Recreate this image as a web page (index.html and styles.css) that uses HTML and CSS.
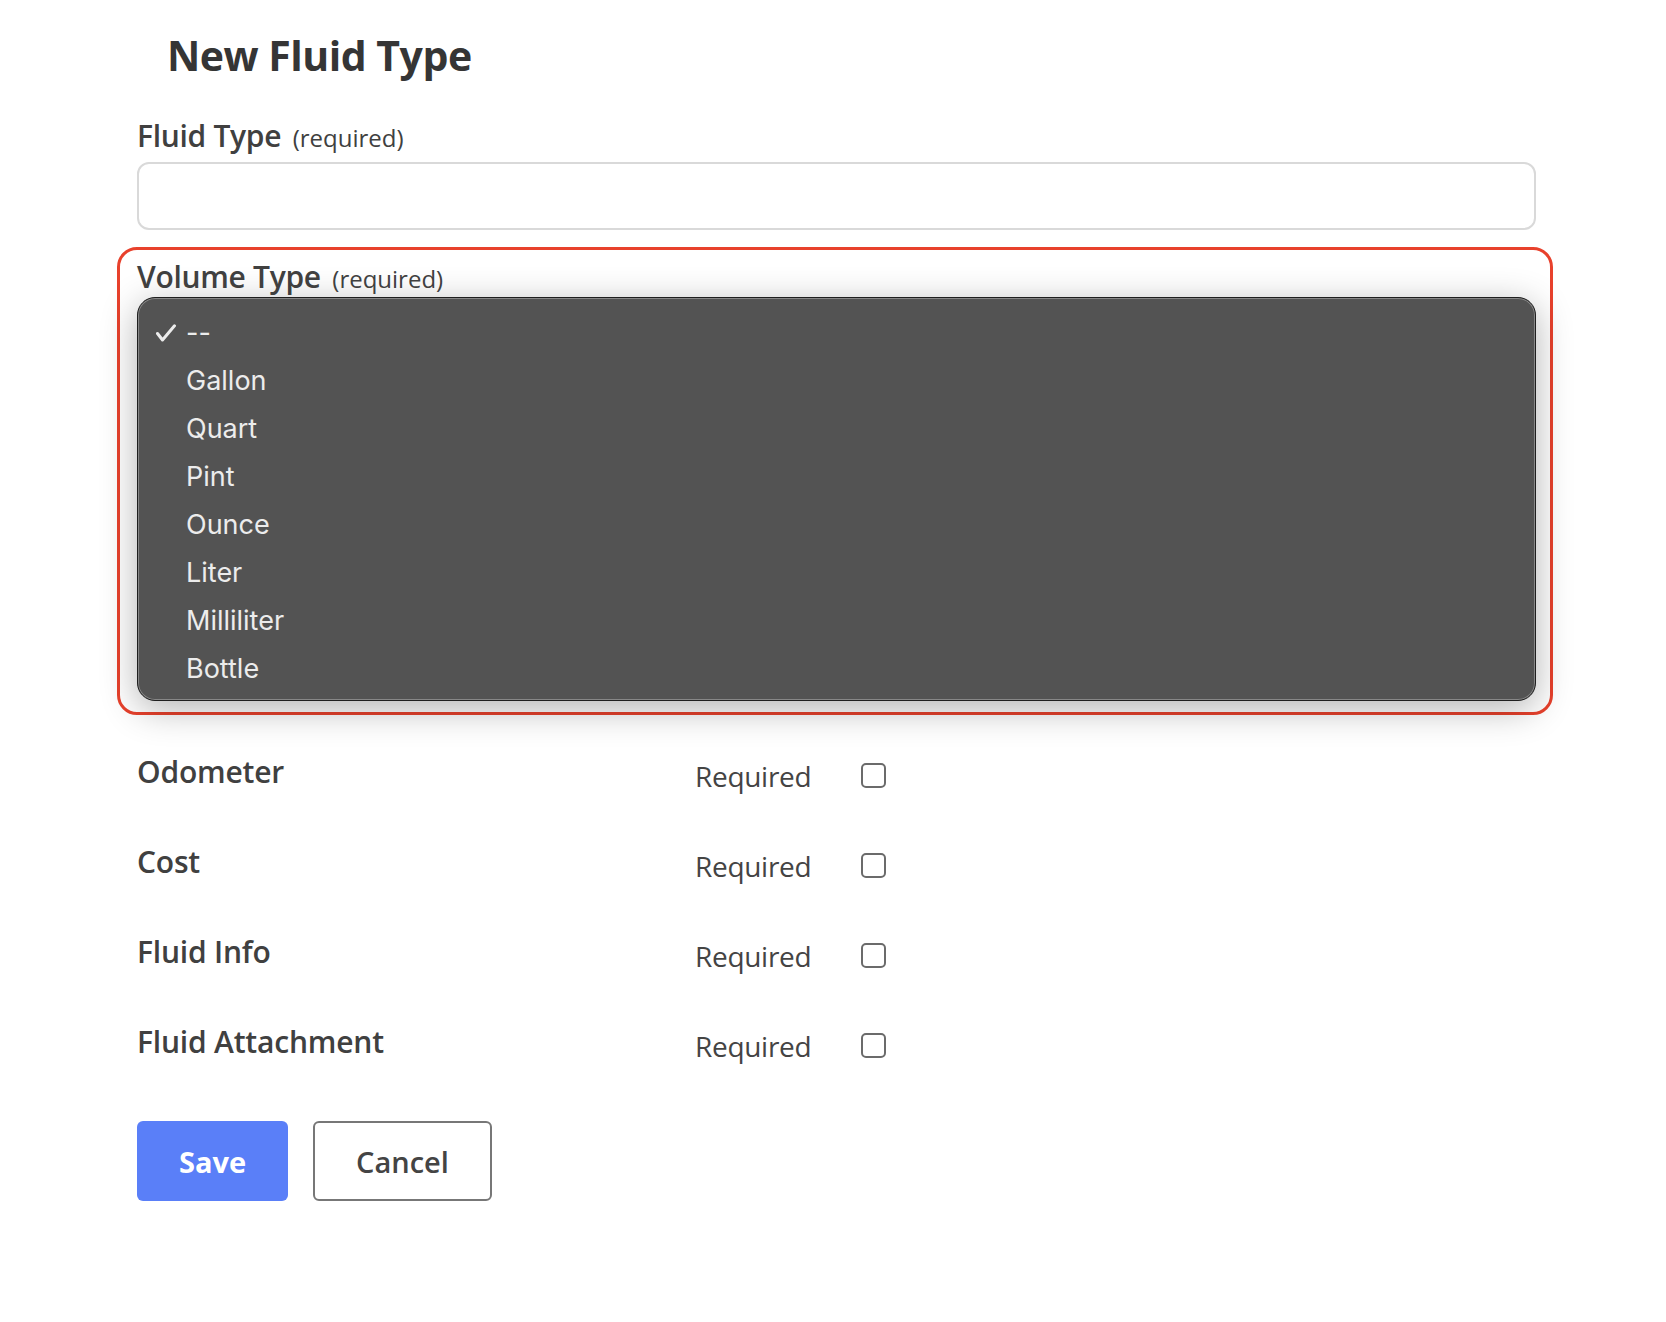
FILE: index.html
```html
<!DOCTYPE html>
<html lang="en">
<head>
    <meta charset="UTF-8">
    <meta name="viewport" content="width=device-width, initial-scale=1.0">
    <title>New Fluid Type</title>
    <link rel="stylesheet" href="styles.css">
</head>
<body>
    <div class="page">
        <h1 class="title">New Fluid Type</h1>

        <div class="field">
            <label class="field-label" for="fluidType">Fluid Type <span class="hint">(required)</span></label>
            <input type="text" id="fluidType" class="text-input">
        </div>

        <div class="field field-focus">
            <div class="field-label">Volume Type <span class="hint">(required)</span></div>
            <ul class="menu">
                <li class="menu-item selected">
                    <svg class="check" width="22" height="18" viewBox="0 0 22 18">
                        <polyline points="2.5,9.5 7.5,16 19.5,1.8" fill="none" stroke="#ececec" stroke-width="3" stroke-linecap="round" stroke-linejoin="round"/>
                    </svg>
                    --
                </li>
                <li class="menu-item">Gallon</li>
                <li class="menu-item">Quart</li>
                <li class="menu-item">Pint</li>
                <li class="menu-item">Ounce</li>
                <li class="menu-item">Liter</li>
                <li class="menu-item">Milliliter</li>
                <li class="menu-item">Bottle</li>
            </ul>
        </div>

        <div class="options">
            <div class="option-row">
                <span class="option-name">Odometer</span>
                <span class="option-req">Required</span>
                <span class="checkbox"></span>
            </div>
            <div class="option-row">
                <span class="option-name">Cost</span>
                <span class="option-req">Required</span>
                <span class="checkbox"></span>
            </div>
            <div class="option-row">
                <span class="option-name">Fluid Info</span>
                <span class="option-req">Required</span>
                <span class="checkbox"></span>
            </div>
            <div class="option-row">
                <span class="option-name">Fluid Attachment</span>
                <span class="option-req">Required</span>
                <span class="checkbox"></span>
            </div>
        </div>

        <div class="actions">
            <button class="btn btn-save">Save</button>
            <button class="btn btn-cancel">Cancel</button>
        </div>
    </div>
</body>
</html>
```

FILE: styles.css
```css
body {
    margin: 0;
    padding: 0;
    background: #fff;
    font-family: "Open Sans", Arial, sans-serif;
    color: #404040;
}

.page {
    width: 1399px;
    padding: 30px 0 0 137px;
}

.title {
    margin: 0 0 38px 30px;
    font-size: 41px;
    line-height: 50px;
    font-weight: 700;
    color: #353535;
    letter-spacing: -0.5px;
}

.field-label {
    display: block;
    font-size: 30px;
    line-height: 36px;
    font-weight: 600;
    color: #404040;
    letter-spacing: -0.3px;
}

.hint {
    font-size: 24px;
    font-weight: 400;
    margin-left: 4px;
    letter-spacing: 0;
}

.field {
    margin-bottom: 17px;
}

.field-label + .text-input {
    margin-top: 6px;
}

.text-input {
    display: block;
    width: 100%;
    height: 68px;
    box-sizing: border-box;
    border: 2px solid #d9d9d9;
    border-radius: 12px;
    background: #fff;
}

.field-focus {
    margin: 0 -17px 0 -20px;
    padding: 9px 14px 11px 17px;
    border: 3px solid #e8412c;
    border-radius: 20px;
}

.menu {
    list-style: none;
    margin: 0;
    padding: 11px 0 7px 0;
    height: 404px;
    box-sizing: border-box;
    background: #535353;
    border: 1px solid #1f1f1f;
    border-radius: 18px;
    box-shadow: inset 0 0 0 1px rgba(255,255,255,0.3), 0 8px 36px rgba(0,0,0,0.3);
    font-family: Inter, "Noto Sans", sans-serif;
}

.menu-item {
    position: relative;
    height: 48px;
    line-height: 48px;
    padding-left: 48px;
    font-size: 27px;
    color: #ececec;
}

.check {
    position: absolute;
    left: 17px;
    top: 15px;
}

.options {
    display: flex;
    flex-direction: column;
    gap: 54px;
    padding-top: 38px;
}

.option-row {
    display: flex;
    align-items: center;
    height: 36px;
}

.option-name {
    width: 558px;
    font-size: 30px;
    font-weight: 600;
    letter-spacing: -0.2px;
}

.option-req {
    width: 166px;
    padding-top: 9px;
    font-size: 28px;
    color: #444;
    letter-spacing: -0.3px;
}

.checkbox {
    width: 25px;
    height: 25px;
    box-sizing: border-box;
    border: 2.5px solid #6b6b6b;
    border-radius: 5px;
    margin-top: 9px;
}

.actions {
    display: flex;
    gap: 25px;
    margin-top: 62px;
}

.btn {
    height: 80px;
    border-radius: 6px;
    font-family: "Open Sans", Arial, sans-serif;
    font-size: 29px;
    cursor: pointer;
}

.btn-save {
    width: 151px;
    background: #5a7ff8;
    border: none;
    color: #fff;
    font-weight: 700;
}

.btn-cancel {
    width: 179px;
    background: #fff;
    border: 2px solid #777;
    color: #444;
    font-weight: 600;
}
```
